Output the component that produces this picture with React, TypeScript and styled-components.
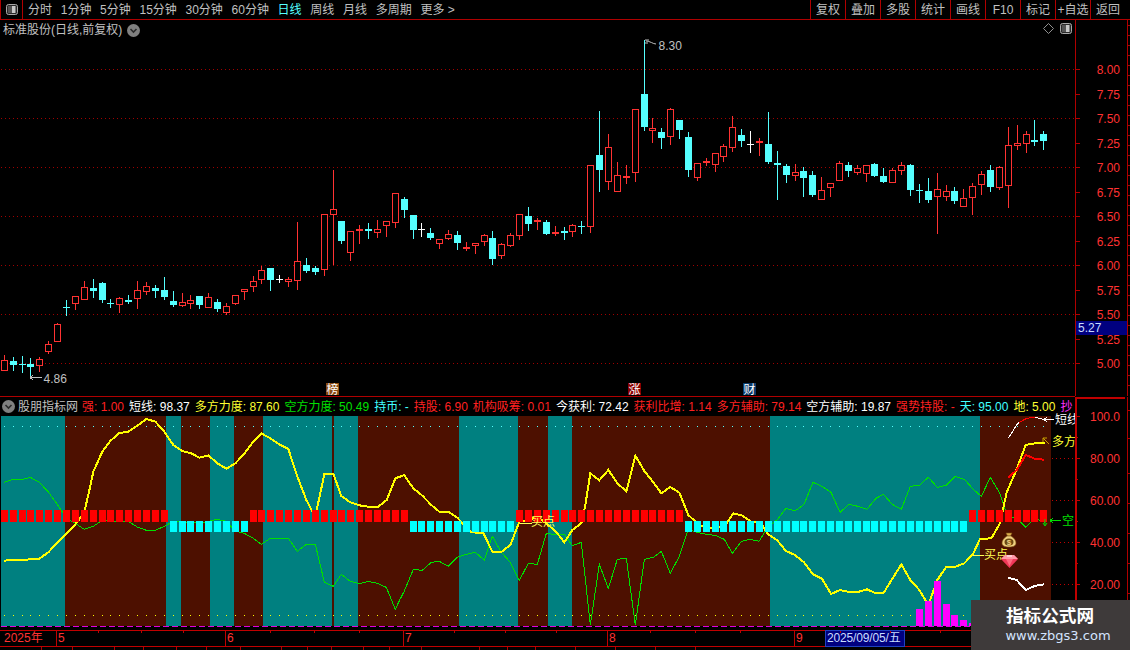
import React from 'react';
import styled, { createGlobalStyle } from 'styled-components';

const FONT = `"Liberation Sans", "Noto Sans CJK SC", sans-serif`;
const RULE = '#b00000';

type Kind = 'r' | 'c' | 'w';
type Raw = [number, number, number, number, number, Kind];
type Candle = { col: number; hi: number; top: number; bot: number; lo: number; kind: Kind };

const conv = (ox: number, oy: number, rows: Raw[]): Candle[] =>
  rows.map(([x, hi, top, bot, lo, kind]) => ({
    col: ox + Math.floor(x / 3),
    hi: Math.round(oy + hi / 3),
    top: Math.round(oy + top / 3),
    bot: Math.round(oy + bot / 3),
    lo: Math.round(oy + lo / 3),
    kind,
  }));

const candles: Candle[] = [
  ...conv(0, 200, [
    [13, 465, 481, 512, 512, 'r'], [40, 472, 483, 495, 512, 'c'], [67, 468, 491, 494, 518, 'c'], [91, 474, 492, 500, 535, 'c'],
    [118, 472, 478, 497, 515, 'r'], [145, 423, 433, 455, 461, 'r'], [172, 370, 373, 425, 425, 'r'], [199, 300, 320, 323, 347, 'c'],
    [226, 289, 289, 311, 330, 'r'], [253, 243, 262, 299, 299, 'r'], [280, 237, 264, 273, 293, 'c'], [307, 246, 249, 299, 308, 'c'],
    [331, 297, 308, 311, 323, 'c'], [358, 292, 295, 314, 338, 'r'], [385, 285, 300, 305, 311, 'c'], [412, 243, 271, 296, 326, 'r'],
    [439, 247, 259, 275, 285, 'r'], [466, 255, 264, 273, 293, 'c'], [493, 231, 270, 291, 299, 'c'], [520, 273, 303, 315, 320, 'c'],
    [547, 279, 307, 317, 320, 'r'], [571, 285, 301, 311, 326, 'r'], [598, 287, 288, 315, 326, 'c'], [625, 279, 292, 323, 323, 'r'],
    [652, 297, 306, 327, 335, 'c'], [679, 309, 319, 338, 344, 'r'], [706, 286, 286, 311, 314, 'r'], [733, 267, 268, 277, 300, 'r'],
    [760, 228, 244, 262, 275, 'r'], [784, 197, 211, 239, 251, 'r'], [811, 204, 204, 239, 272, 'c'], [838, 225, 238, 240, 249, 'w'],
    [865, 232, 238, 247, 260, 'r'], [892, 66, 184, 244, 270, 'r'],
  ]),
  ...conv(300, 30, [
    [19, 685, 705, 723, 729, 'c'], [46, 708, 714, 726, 735, 'c'], [73, 553, 553, 720, 738, 'r'], [100, 420, 538, 556, 705, 'r'],
    [124, 573, 573, 633, 642, 'c'], [151, 603, 603, 668, 693, 'r'], [178, 586, 597, 602, 642, 'r'], [205, 579, 597, 603, 627, 'c'],
    [232, 570, 598, 608, 624, 'r'], [259, 573, 573, 587, 621, 'r'], [286, 490, 490, 578, 594, 'r'], [313, 502, 507, 540, 564, 'c'],
    [340, 555, 555, 600, 627, 'c'], [364, 579, 597, 600, 621, 'w'], [391, 594, 609, 624, 630, 'c'], [418, 628, 628, 641, 657, 'r'],
    [445, 600, 613, 627, 630, 'r'], [472, 603, 615, 639, 660, 'c'], [499, 636, 651, 657, 663, 'r'], [526, 640, 640, 648, 672, 'r'],
    [553, 612, 616, 636, 648, 'r'], [577, 603, 624, 687, 705, 'c'], [604, 640, 643, 678, 687, 'r'], [631, 610, 616, 648, 651, 'r'],
    [658, 551, 553, 617, 630, 'r'], [685, 531, 558, 582, 603, 'c'], [712, 564, 570, 575, 600, 'r'], [739, 571, 576, 612, 615, 'c'],
    [766, 588, 606, 611, 618, 'r'], [793, 591, 603, 608, 630, 'c'], [817, 582, 586, 606, 621, 'r'], [844, 573, 588, 591, 612, 'c'],
    [871, 406, 406, 590, 609, 'r'], [898, 243, 375, 420, 486, 'c'], [925, 312, 352, 455, 480, 'r'], [952, 396, 436, 485, 485, 'r'],
    [979, 405, 438, 443, 462, 'r'], [1006, 238, 238, 428, 456, 'r'], [1033, 30, 192, 291, 303, 'c'], [1057, 264, 295, 302, 339, 'r'],
    [1084, 294, 306, 324, 357, 'c'], [1111, 234, 238, 322, 345, 'r'], [1138, 270, 270, 300, 327, 'c'], [1165, 306, 321, 420, 441, 'c'],
  ]),
  ...conv(690, 90, [
    [21, 220, 220, 263, 272, 'r'], [49, 205, 213, 218, 228, 'r'], [76, 190, 190, 224, 246, 'r'], [100, 162, 169, 200, 216, 'r'],
    [127, 78, 112, 173, 186, 'r'], [154, 117, 135, 152, 171, 'c'], [181, 123, 162, 164, 189, 'w'], [208, 144, 153, 160, 198, 'r'],
    [235, 66, 162, 216, 222, 'c'], [262, 183, 219, 224, 330, 'c'], [289, 222, 228, 255, 279, 'c'], [316, 222, 247, 257, 273, 'r'],
    [340, 231, 243, 264, 321, 'c'], [367, 243, 255, 315, 321, 'c'], [394, 261, 301, 329, 329, 'r'], [421, 280, 280, 293, 321, 'r'],
    [448, 213, 219, 272, 272, 'r'], [475, 216, 225, 243, 261, 'c'], [502, 226, 235, 248, 255, 'r'], [529, 226, 226, 251, 276, 'r'],
    [553, 219, 222, 258, 261, 'c'], [580, 234, 258, 276, 279, 'c'], [607, 234, 241, 278, 278, 'r'], [634, 216, 226, 242, 255, 'r'],
    [661, 222, 225, 300, 318, 'c'], [688, 282, 300, 303, 339, 'c'], [715, 264, 303, 330, 339, 'c'], [742, 249, 298, 320, 432, 'r'],
    [769, 285, 304, 320, 333, 'r'], [793, 291, 303, 333, 342, 'c'], [820, 297, 325, 350, 350, 'r'], [847, 280, 289, 323, 375, 'r'],
    [874, 243, 253, 284, 315, 'r'], [901, 225, 240, 291, 306, 'c'], [928, 228, 232, 293, 300, 'r'], [955, 111, 166, 287, 354, 'r'],
    [982, 105, 160, 167, 180, 'r'], [1009, 123, 133, 161, 189, 'r'], [1033, 90, 150, 156, 168, 'c'], [1060, 123, 132, 152, 180, 'c'],
  ]),
];

const pts = (ox: number, oy: number, p: number[][]) => p.map(([x, y]) => `${ox + x / 3},${oy + y / 3}`).join(' ');

const yellowLine = [
  pts(0, 405, [[12, 467], [40, 465], [67, 464], [103, 463], [118, 461], [145, 442], [172, 412], [199, 385], [226, 358], [240, 340], [253, 320], [265, 270], [280, 200], [307, 140], [331, 108], [358, 84], [385, 80], [412, 62], [439, 42], [466, 50], [493, 80], [520, 120], [547, 138], [574, 145], [598, 158], [625, 151], [652, 175], [679, 191], [706, 175], [733, 146], [760, 110], [784, 85], [811, 100], [838, 118], [865, 132], [892, 215], [919, 285], [940, 325], [950, 315], [973, 208], [1000, 206], [1024, 273], [1051, 292], [1078, 301], [1105, 305], [1135, 305], [1160, 285], [1186, 220]]),
  pts(400, 405, [[0, 215], [12, 210], [40, 250], [67, 272], [94, 300], [118, 320], [145, 320], [172, 338], [190, 358], [214, 382], [250, 384], [277, 440], [304, 441], [331, 420], [358, 350], [385, 345], [412, 335], [445, 360], [472, 385], [493, 412], [517, 375], [544, 355], [556, 300], [571, 205], [598, 226], [625, 195], [652, 235], [679, 259], [706, 152], [733, 198], [760, 232], [784, 265], [811, 246], [838, 263], [865, 330], [892, 355], [919, 370], [950, 368], [973, 365], [1000, 325], [1027, 332], [1054, 350], [1081, 352]]),
  pts(750, 405, [[54, 388], [81, 405], [108, 438], [135, 450], [162, 472], [189, 508], [216, 521], [243, 567], [270, 555], [297, 561], [324, 561], [351, 553], [378, 565], [400, 565], [454, 478], [481, 525], [508, 555], [535, 600], [562, 525], [589, 485], [616, 485], [643, 475], [670, 445], [690, 402], [724, 400], [750, 355], [770, 262], [797, 200], [827, 120], [854, 115], [884, 113]]),
].join(' ');

const greenLine = [
  pts(0, 405, [[12, 232], [40, 223], [67, 223], [91, 217], [118, 232], [145, 261], [172, 298], [199, 340], [226, 355], [253, 373], [280, 364], [307, 346], [331, 347], [358, 350], [385, 349], [412, 366], [439, 376], [466, 376], [493, 364], [520, 349], [600, 355], [652, 343], [679, 349], [706, 378], [733, 385], [760, 400], [784, 418], [811, 400], [865, 400], [892, 439], [919, 418], [946, 418], [973, 532], [1000, 544], [1024, 508], [1051, 529], [1078, 536], [1105, 529], [1132, 535], [1159, 547], [1186, 613]]),
  pts(400, 405, [[0, 583], [12, 560], [40, 493], [67, 496], [94, 472], [118, 469], [145, 484], [172, 457], [199, 448], [226, 442], [253, 466], [277, 394], [304, 442], [331, 472], [358, 526], [385, 475], [412, 478], [439, 385], [472, 390], [493, 388], [517, 422], [544, 412], [571, 660], [598, 478], [625, 550], [652, 463], [679, 460], [706, 660], [733, 463], [760, 457], [784, 439], [811, 505], [838, 454], [865, 373], [892, 382], [919, 388], [946, 391], [973, 403], [997, 445], [1024, 409], [1051, 403]]),
  pts(750, 405, [[27, 409], [54, 365], [81, 345], [108, 310], [135, 318], [162, 298], [189, 232], [216, 244], [243, 262], [270, 322], [297, 298], [324, 304], [351, 313], [378, 280], [400, 268], [427, 298], [454, 313], [481, 244], [508, 241], [535, 217], [562, 247], [589, 241], [616, 214], [643, 223], [670, 253], [694, 274], [721, 217], [748, 262], [775, 340], [800, 338], [827, 367], [854, 340], [884, 352]]),
].join(' ');

const bands: [number, number, 't' | 'r'][] = [
  [1, 65, 't'], [65, 166, 'r'], [166, 181, 't'], [181, 210, 'r'], [210, 234, 't'], [234, 263, 'r'], [263, 332, 't'], [332, 334, 'r'],
  [334, 358, 't'], [358, 459, 'r'], [459, 518, 't'], [518, 548, 'r'], [548, 572, 't'], [572, 770, 'r'], [770, 980, 't'], [980, 1051, 'r'],
];

const bars: [number, number][] = [[916, 612], [925, 588], [934, 528], [943, 598], [951, 630], [960, 645], [969, 654]];

const isRed = (c: number) => c <= 168 || (c >= 250 && c <= 408) || (c >= 516 && c <= 684) || c >= 970;

const priceY = (p: number) => Math.round(69.3 + (8 - p) * 98);
const priceTicks = [8, 7.75, 7.5, 7.25, 7, 6.75, 6.5, 6.25, 6, 5.75, 5.5, 5.25, 5];
const dottedPrices = [8, 7.5, 7, 6.5, 6, 5.5, 5];
const subTicks: [number, string][] = [[416, '100.0'], [458, '80.00'], [500, '60.00'], [542, '40.00'], [584, '20.00']];

const tabs = ['分时', '1分钟', '5分钟', '15分钟', '30分钟', '60分钟', '日线', '周线', '月线', '多周期', '更多 >'];
const tools = ['复权', '叠加', '多股', '统计', '画线', 'F10', '标记', '+自选', '返回'];
const readings: [string, string][] = [
  ['强: 1.00', '#ff2020'], ['短线: 98.37', '#ffffff'], ['多方力度: 87.60', '#ffff30'], ['空方力度: 50.49', '#00e000'],
  ['持币: -', '#40ffff'], ['持股: 6.90', '#ff2020'], ['机构吸筹: 0.01', '#ff2020'], ['今获利: 72.42', '#ffffff'],
  ['获利比增: 1.14', '#ff2020'], ['多方辅助: 79.14', '#ff2020'], ['空方辅助: 19.87', '#ffffff'], ['强势持股: -', '#ff2020'],
  ['天: 95.00', '#40ffff'], ['地: 5.00', '#ffff30'], ['抄', '#ff30ff'],
];
const dateCells: [string, number][] = [['2025年', 56], ['5', 169], ['6', 178], ['7', 204], ['8', 187], ['9', 281]];
const dateTicks = [98, 141, 183, 270, 314, 359, 454, 505, 556, 650, 695, 740, 840, 890, 940];
const stripWidths = [42, 31, 42, 29, 33, 30, 34, 41, 26, 24, 32, 26, 32, 58, 28, 28, 40, 40, 40, 40];

const Global = createGlobalStyle`
  html, body { margin: 0; padding: 0; background: #000; }
  body { width: 1130px; height: 650px; overflow: hidden; }
`;

const Page = styled.div`
  position: relative;
  width: 1130px;
  height: 650px;
  overflow: hidden;
  display: flex;
  flex-direction: column;
  background: #000;
  font: 12px/16px ${FONT};
  color: #c0c0c0;
`;

const Toolbar = styled.header`
  flex: none;
  height: 20px;
  box-sizing: border-box;
  display: flex;
  border-bottom: 1px solid ${RULE};
`;

const IconBox = styled.div`
  width: 23px;
  box-sizing: border-box;
  display: flex;
  align-items: center;
  justify-content: center;
  border-right: 1px solid ${RULE};
  border-left: 1px solid ${RULE};
`;

const TabList = styled.nav`
  display: flex;
  align-items: center;
  gap: 8.7px;
  padding-left: 5px;
`;

const Tab = styled.span<{ $active?: boolean }>`
  white-space: nowrap;
  color: ${(p) => (p.$active ? '#55ffff' : '#c0c0c0')};
`;

const ToolGroup = styled.div`
  margin-left: auto;
  display: flex;
  padding-right: 5px;
`;

const ToolButton = styled.span`
  width: 35px;
  box-sizing: border-box;
  border-left: 1px solid ${RULE};
  display: flex;
  align-items: center;
  justify-content: center;
  white-space: nowrap;
`;

const MainPane = styled.section`
  position: relative;
  flex: none;
  height: 376px;
`;

const ChartHeader = styled.div`
  position: absolute;
  left: 3px;
  top: 2px;
  display: flex;
  align-items: center;
  gap: 5px;
  line-height: 16px;
`;

const CornerTools = styled.div`
  position: absolute;
  right: 58px;
  top: 3px;
  display: flex;
  align-items: center;
  gap: 6px;
`;

const Plot = styled.svg`
  display: block;
  overflow: visible;
`;

const IndicatorPane = styled.section`
  flex: none;
  height: 234px;
  display: flex;
  flex-direction: column;
`;

const IndicatorBar = styled.div`
  flex: none;
  width: 1075px;
  height: 20px;
  box-sizing: border-box;
  border-top: 1px solid ${RULE};
  display: flex;
  align-items: center;
  gap: 5px;
  padding-left: 2px;
  overflow: hidden;
  white-space: nowrap;
`;

const IndicatorName = styled.span`
  color: #c0c0c0;
  margin-left: -2px;
  margin-right: -1px;
`;

const Reading = styled.span<{ $color: string }>`
  color: ${(p) => p.$color};
  flex: none;
`;

const DateAxis = styled.div`
  position: relative;
  flex: none;
  height: 17px;
  box-sizing: border-box;
  display: flex;
  border-top: 1px solid #c00000;
  border-bottom: 1px solid #c00000;
`;

const DateCell = styled.span<{ $w: number; $first?: boolean }>`
  flex: none;
  width: ${(p) => p.$w}px;
  box-sizing: border-box;
  padding-left: ${(p) => (p.$first ? 4 : 1)}px;
  border-left: ${(p) => (p.$first ? 'none' : '1px solid #c00000')};
  color: #ff3232;
  line-height: 15px;
`;

const DateChip = styled.span`
  position: absolute;
  left: 826px;
  top: 0;
  width: 78px;
  height: 15px;
  box-sizing: border-box;
  background: #000080;
  outline: 1px solid #2040c0;
  color: #c8dcff;
  line-height: 15px;
  white-space: nowrap;
  padding-left: 1px;
  letter-spacing: -0.15px;
`;

const DateTicks = styled.svg`
  position: absolute;
  left: 0;
  top: 0;
`;

const TabStrip = styled.div`
  flex: 1;
  display: flex;
`;

const StripCell = styled.span<{ $w: number }>`
  flex: none;
  width: ${(p) => p.$w}px;
  border-right: 1px solid ${RULE};
  box-sizing: border-box;
`;

const Watermark = styled.aside`
  position: absolute;
  right: 0;
  bottom: 0;
  width: 159px;
  height: 50px;
  background: #3e3a3a;
  display: flex;
  flex-direction: column;
  align-items: center;
  font-family: ${FONT};
`;

const MarkTitle = styled.strong`
  color: #fff;
  font-size: 17.6px;
  line-height: 22px;
  margin-top: 5px;
  margin-left: -1px;
`;

const MarkUrl = styled.span`
  color: #d4e4ff;
  font: 13px/16px "DejaVu Sans", sans-serif;
  margin-top: 1px;
  margin-left: 15px;
`;

const AxisText = styled.text<{ $color?: string }>`
  font: 12px ${FONT};
  fill: ${(p) => p.$color || '#ff3232'};
  dominant-baseline: central;
`;

const ChevronDisc: React.FC = () => (
  <svg width="13" height="13" viewBox="0 0 13 13">
    <circle cx="6.5" cy="6.5" r="6.5" fill="#808080" />
    <path d="M3.5 5 L6.5 8 L9.5 5" fill="none" stroke="#2a2a2a" strokeWidth="1.6" />
  </svg>
);

const PanelIcon: React.FC = () => (
  <svg width="12" height="11" viewBox="0 0 12 11">
    <rect x="0.5" y="0.5" width="11" height="10" rx="2" fill="#2a2a2a" stroke="#a8a8a8" />
    <rect x="6" y="2" width="3.5" height="7" fill="#c8c8c8" />
    <rect x="2" y="2" width="4" height="7" fill="#555" />
  </svg>
);

const CandleMark: React.FC<{ d: Candle }> = ({ d }) => {
  const color = d.kind === 'r' ? '#ff3232' : d.kind === 'c' ? '#55ffff' : '#ffffff';
  const h = d.bot - d.top;
  const thin = h <= 2 || d.kind === 'w';
  return (
    <g shapeRendering="crispEdges">
      <rect x={d.col} y={d.hi} width={1} height={Math.max(1, d.lo - d.hi)} fill={color} />
      {thin || d.kind === 'c' ? (
        <rect x={d.col - 3} y={d.top} width={7} height={Math.max(1, h)} fill={color} />
      ) : (
        <rect x={d.col - 2.5} y={d.top + 0.5} width={6} height={h - 1} fill="#000" stroke={color} />
      )}
    </g>
  );
};

const MoneyBag: React.FC = () => (
  <g transform="translate(1002 531)">
    <path d="M4 2 L10 2 L8.5 5 L5.5 5 Z" fill="#e0b050" stroke="#7a5010" strokeWidth="0.6" />
    <path d="M5 5 L9 5 C12.5 7 14 10 14 12 C14 15 11 16 7 16 C3 16 0 15 0 12 C0 10 1.5 7 5 5 Z" fill="#f0d080" stroke="#7a5010" strokeWidth="0.6" />
    <ellipse cx="7" cy="11" rx="4.5" ry="3.6" fill="#6a4810" />
    <text x="7" y="14" textAnchor="middle" fontSize="8" fontWeight="bold" fill="#f0d080" fontFamily="Liberation Sans">$</text>
  </g>
);

const Gem: React.FC = () => (
  <g transform="translate(1001 555)">
    <polygon points="4,0 13,0 17,4 8.5,13 0,4" fill="#f03858" />
    <polygon points="4,0 13,0 17,4 0,4" fill="#ff9aa8" />
    <polygon points="5,4 12,4 8.5,11" fill="#ff6a80" />
    <path d="M6 1 L11 1" stroke="#fff" strokeWidth="1" />
  </g>
);

const App: React.FC = () => (
  <Page>
    <Global />
    <Toolbar>
      <IconBox>
        <PanelIcon />
      </IconBox>
      <TabList>
        {tabs.map((t) => (
          <Tab key={t} $active={t === '日线'}>{t}</Tab>
        ))}
      </TabList>
      <ToolGroup>
        {tools.map((t) => (
          <ToolButton key={t}>{t}</ToolButton>
        ))}
      </ToolGroup>
    </Toolbar>

    <MainPane>
      <Plot width="1130" height="376" viewBox="0 20 1130 376">
        {dottedPrices.map((p) => (
          <line key={p} x1="1" x2="1075" y1={priceY(p) + 0.5} y2={priceY(p) + 0.5} stroke="#a00000" strokeDasharray="1 3" shapeRendering="crispEdges" />
        ))}
        {candles.map((c) => (
          <CandleMark key={c.col} d={c} />
        ))}
        <g shapeRendering="crispEdges">
          <rect x="1075" y="20" width="1" height="376" fill={RULE} />
          <rect x="1127" y="20" width="1" height="376" fill={RULE} />
          {priceTicks.map((p) => (
            <rect key={p} x="1075" y={priceY(p)} width="5" height="1" fill={RULE} />
          ))}
          {Array.from({ length: 37 }, (_, i) => (
            <rect key={i} x="1127" y={25 + i * 10} width="3" height="1" fill={RULE} />
          ))}
          <rect x="1076" y="321" width="51" height="14" fill="#000080" />
        </g>
        {priceTicks.map((p) => (
          <AxisText key={p} x="1120" y={priceY(p) + 1} textAnchor="end">{p.toFixed(2)}</AxisText>
        ))}
        <AxisText x="1078" y="328" $color="#c8dcff">5.27</AxisText>

        <path d="M645 40 H649 M645 43 H648 M646 41 C650 41 653 44 656 44" fill="none" stroke="#c0c0c0" />
        <AxisText x="658.5" y="46" $color="#c0c0c0">8.30</AxisText>
        <path d="M30 377.5 H42 M30 377.5 L33 375 M30 377.5 L33 380" fill="none" stroke="#c0c0c0" shapeRendering="crispEdges" />
        <AxisText x="43.5" y="379" $color="#c0c0c0">4.86</AxisText>

        <g shapeRendering="crispEdges" fontSize="12" fontFamily="Noto Sans CJK SC">
          <rect x="326" y="383" width="13" height="12" fill="#8a4a10" />
          <text x="332.5" y="393.5" textAnchor="middle" fill="#fff">榜</text>
          <rect x="628" y="383" width="13" height="12" fill="#8b0000" />
          <text x="634.5" y="393.5" textAnchor="middle" fill="#fff">涨</text>
          <rect x="743" y="383" width="13" height="12" fill="#0a3a6a" />
          <text x="749.5" y="393.5" textAnchor="middle" fill="#fff">财</text>
        </g>
      </Plot>
      <ChartHeader>
        <span>标准股份(日线,前复权)</span>
        <ChevronDisc />
      </ChartHeader>
      <CornerTools>
        <svg width="11" height="11" viewBox="0 0 11 11">
          <path d="M5.5 0.5 L10.5 5.5 L5.5 10.5 L0.5 5.5 Z" fill="none" stroke="#909090" />
        </svg>
        <PanelIcon />
      </CornerTools>
    </MainPane>

    <IndicatorPane>
      <IndicatorBar>
        <ChevronDisc />
        <IndicatorName>股朋指标网</IndicatorName>
        {readings.map(([text, color]) => (
          <Reading key={text} $color={color}>{text}</Reading>
        ))}
      </IndicatorBar>
      <Plot width="1130" height="214" viewBox="0 416 1130 214">
        <g shapeRendering="crispEdges">
          {bands.map(([a, b, k]) => (
            <rect key={a} x={a} y="416" width={b - a} height="210" fill={k === 't' ? '#008080' : '#4d1000'} />
          ))}
          {candles.map((c) => (
            <React.Fragment key={c.col}>
              <rect x={c.col} y="426" width="1" height="1" fill="#55ffff" />
              <rect x={c.col} y="615" width="1" height="1" fill="#ffff00" />
            </React.Fragment>
          ))}
          {subTicks.slice(1).map(([y]) => (
            <line key={y} x1="1052" x2="1075" y1={y + 0.5} y2={y + 0.5} stroke="#c00000" strokeDasharray="1 3" />
          ))}
          <polyline points={greenLine} fill="none" stroke="#00e000" strokeWidth="1" />
          <polyline points={yellowLine} fill="none" stroke="#ffff00" strokeWidth="2" />
          {candles.map((c) => {
            const red = isRed(c.col);
            return <rect key={c.col} x={c.col - 3} y={red ? 510 : 521} width="7" height={red ? 12 : 11} fill={red ? '#ff0000' : '#00ffff'} />;
          })}
          <polyline points={pts(750, 405, [[775, 218], [800, 195], [827, 150], [854, 161], [881, 164]])} fill="none" stroke="#ff0000" strokeWidth="2" />
          <polyline points={pts(750, 405, [[775, 518], [800, 525], [827, 555], [854, 543], [881, 538]])} fill="none" stroke="#ffffff" strokeWidth="2" />
          <polyline points={pts(750, 405, [[775, 100], [800, 60], [808, 52]])} fill="none" stroke="#ffffff" />
          <polyline points={pts(750, 405, [[808, 52], [830, 40], [854, 36]])} fill="none" stroke="#ff0000" />
          <polyline points={pts(750, 405, [[854, 36], [884, 44]])} fill="none" stroke="#ffffff" />
          {bars.map(([x, y]) => (
            <rect key={x} x={x} y={405 + y / 3} width="7" height={626 - 405 - y / 3} fill="#ff00ff" />
          ))}
          <line x1="1" x2="1051" y1="626.5" y2="626.5" stroke="#e000e0" strokeDasharray="6 3" />
        </g>

        <path d="M1044 419.5 H1054 M1044 419.5 L1047 417 M1044 419.5 L1047 422" fill="none" stroke="#fff" shapeRendering="crispEdges" />
        <AxisText x="1055" y="420" $color="#ffffff">短线</AxisText>
        <path d="M1043 438 L1049 444 M1043 438 V442 M1043 438 H1047" fill="none" stroke="#c8a000" />
        <AxisText x="1052" y="442" $color="#ffff30">多方</AxisText>
        <path d="M1050 520.5 H1061 M1050 520.5 L1053 518 M1050 520.5 L1053 523" fill="none" stroke="#00e000" shapeRendering="crispEdges" />
        <AxisText x="1062" y="521" $color="#00e000">空</AxisText>
        <path d="M1045 519 V525 M1043 523 L1045 526 L1047 523" fill="none" stroke="#00e000" />

        <path d="M973 555.5 H984" stroke="#ffff55" shapeRendering="crispEdges" />
        <AxisText x="984" y="555" $color="#ffff55">买点</AxisText>
        <path d="M520 523.5 H532" stroke="#ffff55" shapeRendering="crispEdges" />
        <AxisText x="531" y="522" $color="#ffff55">买点</AxisText>
        <MoneyBag />
        <Gem />

        <g shapeRendering="crispEdges">
          <rect x="1076" y="397" width="54" height="233" fill="#000" />
          <rect x="1075" y="397" width="2" height="233" fill="#c00000" />
          <rect x="1075" y="397" width="50" height="2" fill="#c00000" />
          <rect x="1127" y="397" width="1" height="233" fill={RULE} />
          {subTicks.map(([y]) => (
            <rect key={y} x="1075" y={y} width="5" height="1" fill="#c00000" />
          ))}
          {[437, 479, 521, 563, 605].map((y) => (
            <rect key={y} x="1075" y={y} width="3" height="1" fill="#c00000" />
          ))}
          {[410, 438, 473, 503, 533, 563, 593, 623].map((y) => (
            <rect key={y} x="1127" y={y} width="3" height="1" fill={RULE} />
          ))}
        </g>
        {subTicks.map(([y, t]) => (
          <AxisText key={y} x="1120" y={y + 1} textAnchor="end">{t}</AxisText>
        ))}
      </Plot>
    </IndicatorPane>

    <DateAxis>
      {dateCells.map(([t, w], i) => (
        <DateCell key={t} $w={w} $first={i === 0}>{t}</DateCell>
      ))}
      <DateChip>2025/09/05/五</DateChip>
      <DateTicks width="1075" height="4" viewBox="0 0 1075 4">
        {dateTicks.map((x) => (
          <rect key={x} x={x} y="0" width="1" height="2" fill="#c00000" />
        ))}
      </DateTicks>
    </DateAxis>
    <TabStrip>
      {stripWidths.map((w, i) => (
        <StripCell key={i} $w={w} />
      ))}
    </TabStrip>

    <Watermark>
      <MarkTitle>指标公式网</MarkTitle>
      <MarkUrl>www.zbgs3.com</MarkUrl>
    </Watermark>
  </Page>
);

export default App;
